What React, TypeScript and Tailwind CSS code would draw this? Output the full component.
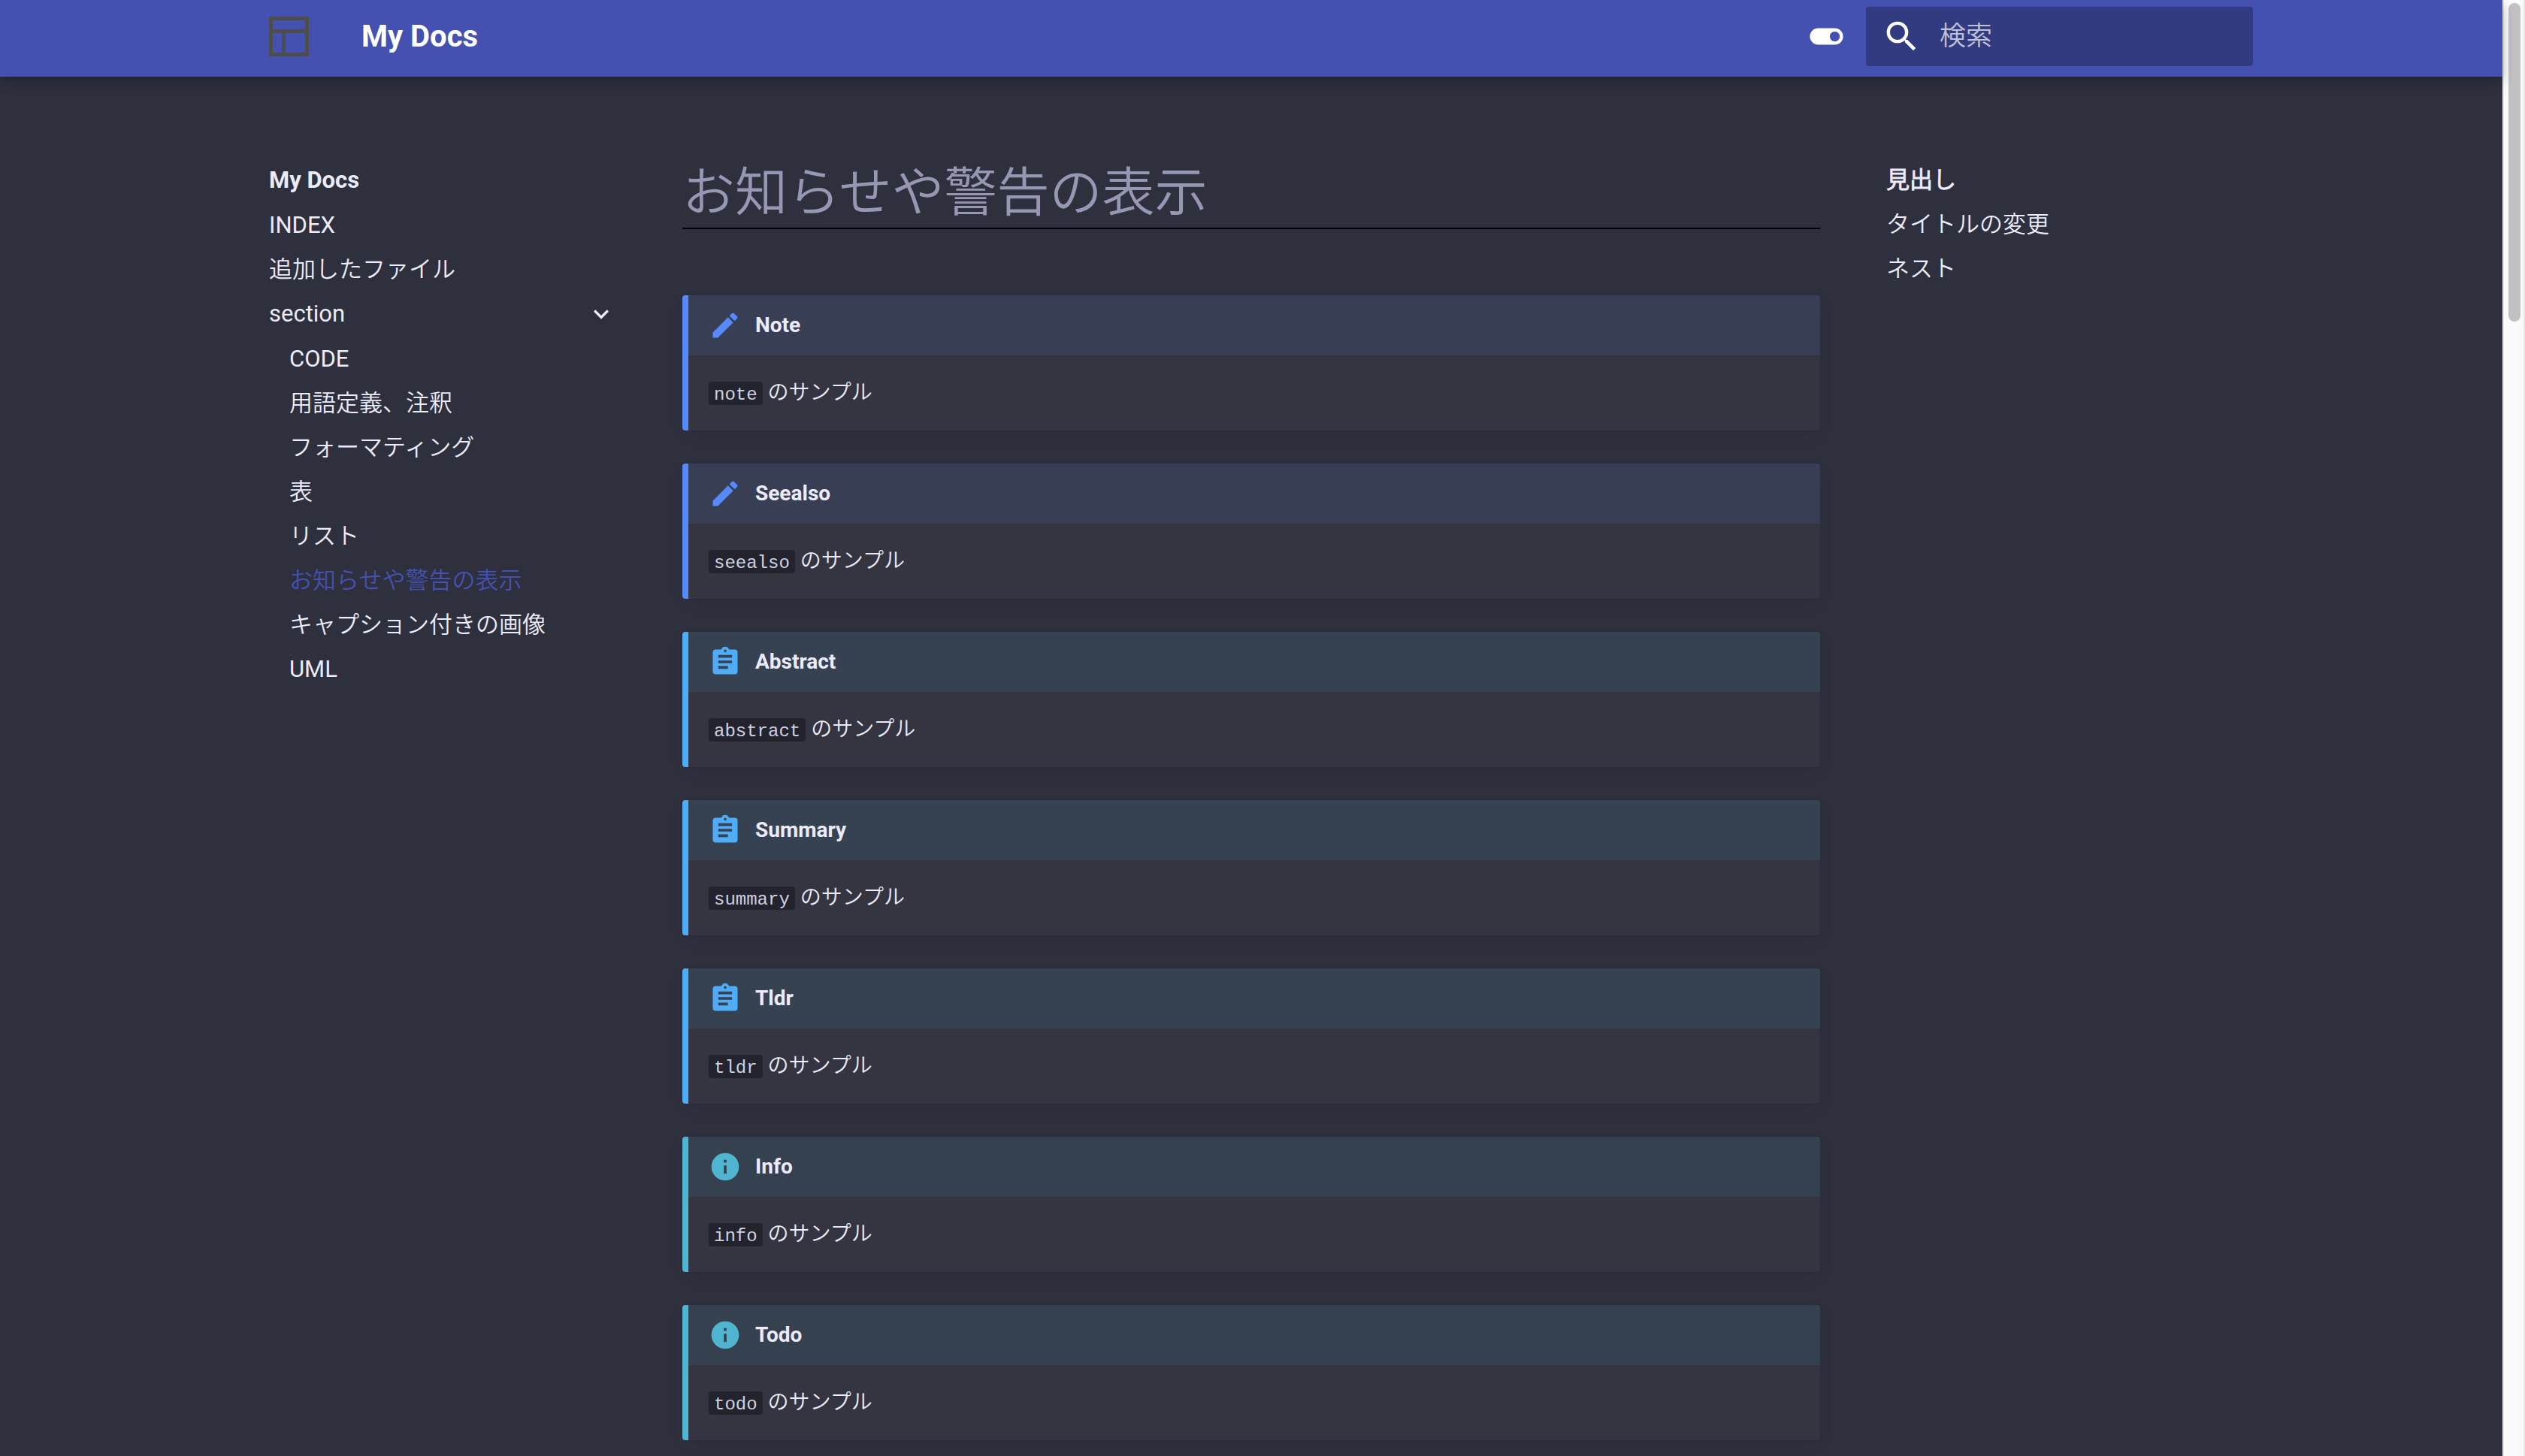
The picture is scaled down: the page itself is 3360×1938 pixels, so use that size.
import { useState } from "react";

const icons = {
  pencil:
    "M20.71 7.04c.39-.39.39-1.04 0-1.41l-2.34-2.34c-.37-.39-1.02-.39-1.41 0l-1.84 1.83 3.75 3.75M3 17.25V21h3.75L17.81 9.93l-3.75-3.75L3 17.25Z",
  clipboard:
    "M17 9H7V7h10m0 6H7v-2h10m-3 6H7v-2h7M12 3a1 1 0 0 1 1 1 1 1 0 0 1-1 1 1 1 0 0 1-1-1 1 1 0 0 1 1-1m7 0h-4.18C14.4 1.84 13.3 1 12 1c-1.3 0-2.4.84-2.82 2H5a2 2 0 0 0-2 2v14a2 2 0 0 0 2 2h14a2 2 0 0 0 2-2V5a2 2 0 0 0-2-2Z",
  info: "M13 9h-2V7h2m0 10h-2v-6h2m-1-9A10 10 0 0 0 2 12a10 10 0 0 0 10 10 10 10 0 0 0 10-10A10 10 0 0 0 12 2Z",
  toggle:
    "M17 7H7a5 5 0 0 0-5 5 5 5 0 0 0 5 5h10a5 5 0 0 0 5-5 5 5 0 0 0-5-5m0 8a3 3 0 0 1-3-3 3 3 0 0 1 3-3 3 3 0 0 1 3 3 3 3 0 0 1-3 3Z",
  magnify:
    "M9.5 3A6.5 6.5 0 0 1 16 9.5c0 1.61-.59 3.09-1.56 4.23l.27.27h.79l5 5-1.5 1.5-5-5v-.79l-.27-.27A6.516 6.516 0 0 1 9.5 16 6.5 6.5 0 0 1 3 9.5 6.5 6.5 0 0 1 9.5 3m0 2C7 5 5 7 5 9.5S7 14 9.5 14 14 12 14 9.5 12 5 9.5 5Z",
  chevron: "M7.42 8.59 12 13.17l4.59-4.58L18 10l-6 6-6-6 1.42-1.41Z",
};

function Icon({ name, className }: { name: keyof typeof icons; className: string }) {
  return (
    <svg viewBox="0 0 24 24" aria-hidden="true" className={`shrink-0 fill-current ${className}`}>
      <path d={icons[name]} />
    </svg>
  );
}

const tones = {
  note: { edge: "border-[#5689fa]", icon: "text-[#5689fa]", head: "bg-[#383e54]" },
  abstract: { edge: "border-[#4facf7]", icon: "text-[#4facf7]", head: "bg-[#364152]" },
  info: { edge: "border-[#50b5d0]", icon: "text-[#50b5d0]", head: "bg-[#36414f]" },
};

type Admonition = { title: string; code: string; tone: keyof typeof tones; icon: keyof typeof icons };

const admonitions: Admonition[] = [
  { title: "Note", code: "note", tone: "note", icon: "pencil" },
  { title: "Seealso", code: "seealso", tone: "note", icon: "pencil" },
  { title: "Abstract", code: "abstract", tone: "abstract", icon: "clipboard" },
  { title: "Summary", code: "summary", tone: "abstract", icon: "clipboard" },
  { title: "Tldr", code: "tldr", tone: "abstract", icon: "clipboard" },
  { title: "Info", code: "info", tone: "info", icon: "info" },
  { title: "Todo", code: "todo", tone: "info", icon: "info" },
];

const sectionPages = [
  "CODE",
  "用語定義、注釈",
  "フォーマティング",
  "表",
  "リスト",
  "お知らせや警告の表示",
  "キャプション付きの画像",
  "UML",
];
const currentPage = "お知らせや警告の表示";

function Header() {
  const [query, setQuery] = useState("");
  return (
    <header className="relative z-10 bg-[#4451b0] text-white shadow-[0_0_8px_rgba(0,0,0,0.1),0_8px_16px_rgba(0,0,0,0.2)]">
      <div className="mx-auto flex h-[102px] max-w-[2684px] items-center px-[9px] pb-[5px]">
        <a href="#home" aria-label="My Docs" className="ml-[26px] block">
          <svg viewBox="0 0 53 53" aria-hidden="true" className="size-[53px] fill-none stroke-[#4d4d4d] stroke-[5]">
            <path d="M2.5 2.5h48v48h-48zM2.5 19.5h48M19.5 19.5v31" />
          </svg>
        </a>
        <a href="#home" className="ml-[70px] text-[40px] leading-[48px] font-bold">
          My Docs
        </a>
        <button type="button" aria-label="テーマの切り替え" className="mr-[26px] ml-auto">
          <Icon name="toggle" className="block size-[53px]" />
        </button>
        <label className="flex h-[79px] w-[515px] items-center rounded-sm bg-[#323b80] pl-[21px]">
          <Icon name="magnify" className="size-[53px]" />
          <input
            type="text"
            aria-label="検索"
            placeholder="検索"
            value={query}
            onChange={(e) => setQuery(e.target.value)}
            className="ml-6 h-full min-w-0 flex-1 bg-transparent text-[35px] text-white outline-none placeholder:text-white/70"
          />
        </label>
      </div>
    </header>
  );
}

function Sidebar() {
  return (
    <nav aria-label="My Docs" className="w-[462px] shrink-0 pt-5 text-[31px] leading-[40px]">
      <p className="mb-5 font-bold">My Docs</p>
      <ul className="flex flex-col gap-[19px]">
        <li>
          <a href="#index">INDEX</a>
        </li>
        <li>
          <a href="#added">追加したファイル</a>
        </li>
        <li>
          <button type="button" aria-expanded="true" className="flex w-full items-center justify-between">
            section
            <Icon name="chevron" className="size-10" />
          </button>
          <ul className="mt-5 flex flex-col gap-[19px] pl-[27px]">
            {sectionPages.map((page) => (
              <li key={page}>
                <a
                  href={`#${page}`}
                  aria-current={page === currentPage ? "page" : undefined}
                  className={page === currentPage ? "text-[#4451b0]" : ""}
                >
                  {page}
                </a>
              </li>
            ))}
          </ul>
        </li>
      </ul>
    </nav>
  );
}

function Notice({ title, code, tone, icon }: Admonition) {
  const t = tones[tone];
  return (
    <section
      className={`overflow-hidden rounded-sm border-l-8 bg-[#343541] shadow-[0_8px_20px_rgba(0,0,0,0.05),0_0_2px_rgba(0,0,0,0.1)] ${t.edge}`}
    >
      <h2 className={`flex h-20 items-center gap-[18px] pl-[27px] font-bold ${t.head}`}>
        <Icon name={icon} className={`size-11 ${t.icon}`} />
        {title}
      </h2>
      <p className="px-[27px] py-7">
        <code className="rounded-sm bg-[#23232d] px-[7px] pt-1 font-['Liberation_Mono',monospace] text-[24px] leading-none text-[#d0d1e0]">
          {code}
        </code>{" "}
        のサンプル
      </p>
    </section>
  );
}

export default function App() {
  return (
    <div className="flex h-screen overflow-hidden bg-[#2e303e] font-['Roboto','Noto_Sans_CJK_JP_DemiLight','Noto_Sans_CJK_JP',sans-serif] text-[#ebebfb]">
      <div className="min-w-0 flex-1">
        <Header />
        <div className="mx-auto flex max-w-[2684px] gap-[88px] px-[35px] pt-[98px]">
          <Sidebar />
          <main className="min-w-0 flex-1 text-[28px] leading-[44px]">
            <h1 className="mb-[88px] border-b-2 border-black pt-3 text-[70px] leading-[91px] font-[350] text-[#9697b2]">
              お知らせや警告の表示
            </h1>
            <div className="flex flex-col gap-11">
              {admonitions.map((a) => (
                <Notice key={a.title} {...a} />
              ))}
            </div>
          </main>
          <nav aria-label="見出し" className="w-[462px] shrink-0 pt-5 text-[31px] leading-[40px]">
            <p className="mb-[19px] font-bold">見出し</p>
            <ul className="flex flex-col gap-[19px]">
              <li>
                <a href="#title">タイトルの変更</a>
              </li>
              <li>
                <a href="#nest">ネスト</a>
              </li>
            </ul>
          </nav>
        </div>
      </div>
      <div aria-hidden="true" className="w-[30px] shrink-0 border-x-2 border-[#e8e8e8] bg-[#fafafa] px-[6px] pt-1">
        <div className="h-[424px] w-4 rounded-full bg-[#c1c1c1]" />
      </div>
    </div>
  );
}
